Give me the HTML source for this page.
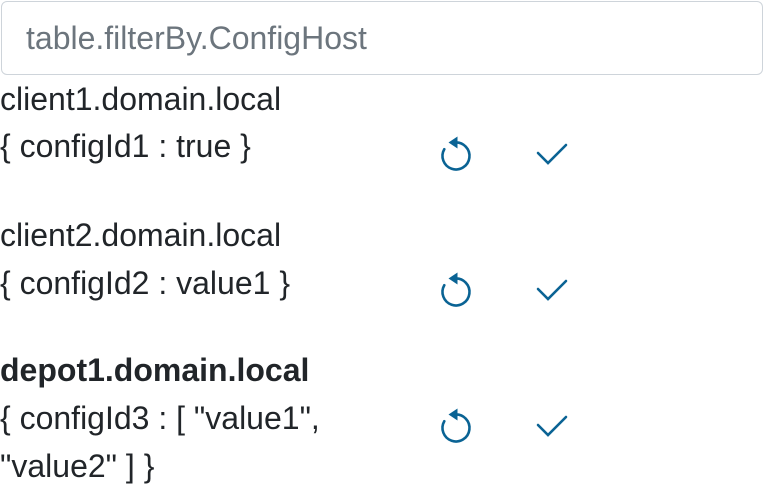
<!DOCTYPE html>
<html><head><style>
body{margin:0;width:764px;height:492px;background:#fff;font-family:"Liberation Sans",sans-serif;color:#212529;position:relative;overflow:hidden}
.in{position:absolute;left:1px;top:1px;width:762px;height:74px;border:1px solid #ced4da;border-radius:6px;box-sizing:border-box}
.ph{position:absolute;left:26px;top:14px;font-size:32px;line-height:48px;color:#6c757d}
.t{position:absolute;left:0;font-size:32px;line-height:48px;white-space:nowrap}
svg{position:absolute}
</style></head><body>
<div class="in"></div><div class="ph">table.filterBy.ConfigHost</div>
<div class="t" style="top:75px">client1.domain.local</div>
<div class="t" style="top:122px">{ configId1 : true }</div>
<div class="t" style="top:211px">client2.domain.local</div>
<div class="t" style="top:259px">{ configId2 : value1 }</div>
<div class="t" style="top:346px;font-weight:bold">depot1.domain.local</div>
<div class="t" style="top:394px">{ configId3 : [ "value1",</div>
<div class="t" style="top:442px">"value2" ] }</div>
<svg width="764" height="492" style="left:0;top:0">
<g fill="none" stroke="#0a6394" stroke-width="2.6" stroke-linecap="round">
<g id="r"><path d="M444.3 149.2 A13.5 13.5 0 1 0 455 142.5"/><path d="M538 153 L548 163 L566 145"/></g>
<use href="#r" y="136"/><use href="#r" y="272"/>
</g>
<g fill="#0a6394"><path id="a" d="M448.5 142.5 L457.5 136.5 L457.5 148.5 Z"/><use href="#a" y="136"/><use href="#a" y="272"/></g>
</svg>
</body></html>
